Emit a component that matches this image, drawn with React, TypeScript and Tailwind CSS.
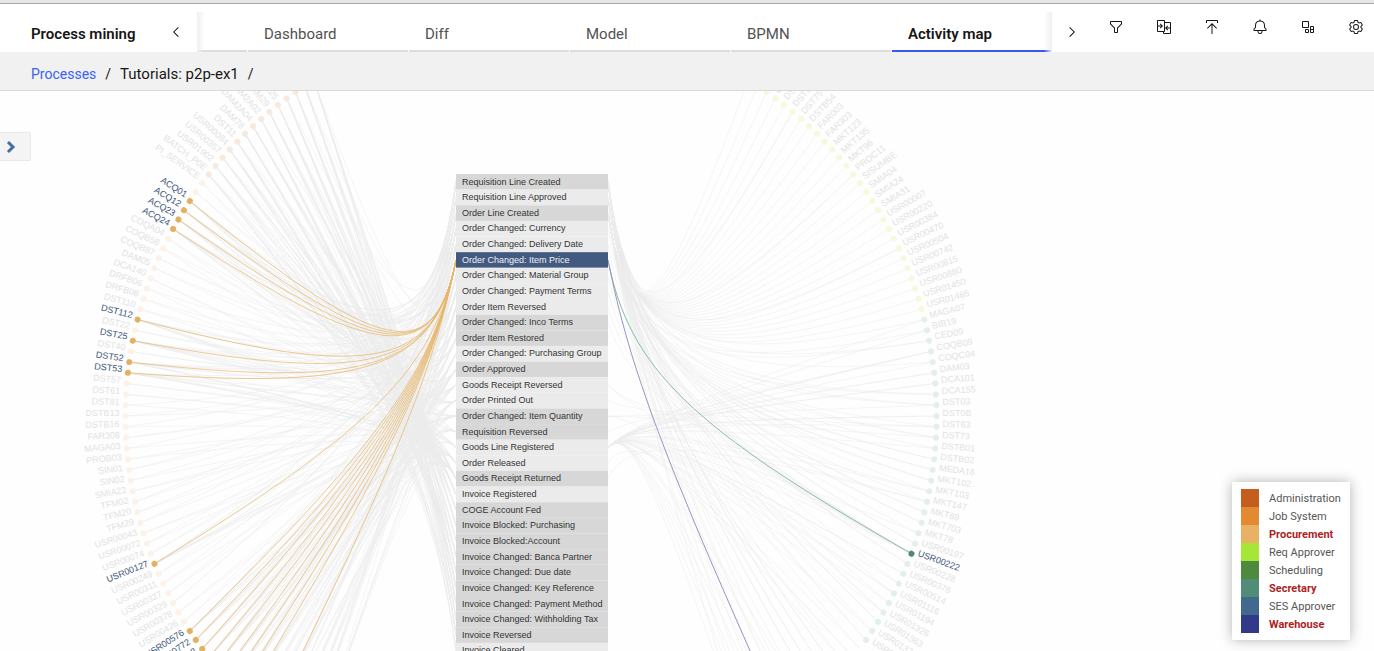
import React from "react";

type Side = "left" | "right";

interface ActivityNode {
  side: Side;
  step: number;
  label: string;
  color: string;
}

const CENTER_X = 531;
const CENTER_Y = 416;
const RADIUS_X = 405.5;
const RADIUS_Y = 398;
const STEP = (1.557 * Math.PI) / 180;
const LAST_STEP = 37;

const LIST_LEFT = 456;
const LIST_WIDTH = 152;
const LIST_TOP = 174;
const ROW_HEIGHT = 15.63;
const SELECTED_ROW = 5;

const activities: { name: string; dark?: boolean }[] = [
  { name: "Requisition Line Created", dark: true },
  { name: "Requisition Line Approved" },
  { name: "Order Line Created", dark: true },
  { name: "Order Changed: Currency" },
  { name: "Order Changed: Delivery Date" },
  { name: "Order Changed: Item Price" },
  { name: "Order Changed: Material Group" },
  { name: "Order Changed: Payment Terms" },
  { name: "Order Item Reversed" },
  { name: "Order Changed: Inco Terms", dark: true },
  { name: "Order Item Restored", dark: true },
  { name: "Order Changed: Purchasing Group" },
  { name: "Order Approved", dark: true },
  { name: "Goods Receipt Reversed" },
  { name: "Order Printed Out" },
  { name: "Order Changed: Item Quantity", dark: true },
  { name: "Requisition Reversed", dark: true },
  { name: "Goods Line Registered" },
  { name: "Order Released" },
  { name: "Goods Receipt Returned", dark: true },
  { name: "Invoice Registered" },
  { name: "COGE Account Fed", dark: true },
  { name: "Invoice Blocked: Purchasing", dark: true },
  { name: "Invoice Blocked:Account", dark: true },
  { name: "Invoice Changed: Banca Partner", dark: true },
  { name: "Invoice Changed: Due date", dark: true },
  { name: "Invoice Changed: Key Reference", dark: true },
  { name: "Invoice Changed: Payment Method", dark: true },
  { name: "Invoice Changed: Withholding Tax", dark: true },
  { name: "Invoice Reversed", dark: true },
  { name: "Invoice Cleared" },
];

// Labels run from the top of the ring (step 35) downwards.
const leftLabels = [
  "", "", "DAM25", "DAM29", "DAM2A02", "DAM2A04", "DAM78", "DST11",
  "USR00084", "USR00357", "USR01902", "BATCH_P0E", "PI_SERVICE", "", "ACQ01",
  "ACQ12", "ACQ23", "ACQ24", "COQA04", "COQB58", "COQB87", "DAM05", "DCA140",
  "DRFB06", "DRFB08", "DST110", "DST112", "DST22", "DST25", "DST40", "DST52",
  "DST53", "DST57", "DST61", "DST81", "DSTB13", "DSTB16", "FAR308", "MAGA03",
  "PROB03", "SIN01", "SIN02", "SMIA22", "TFM02", "TFM20", "TFM29", "USR00043",
  "USR00072", "USR00074", "USR00127", "USR00249", "USR00311", "USR00327",
  "USR00329", "USR00378", "USR00426", "USR00576", "USR00772", "USR00792",
];

const rightLabels = [
  "", "DST40", "DST51", "DST58", "DST75", "DSTB54", "FAR003", "FAR303",
  "MKT123", "MKT135", "MKT96", "PROC11", "SISUMBE", "SMIA04", "SMIA24",
  "SMIA31", "USR00007", "USR00220", "USR00384", "USR00470", "USR00504",
  "USR00742", "USR00815", "USR00880", "USR01450", "USR01465", "MAGA07",
  "BIB19", "CED09", "COQB09", "COQC04", "DAM03", "DCA101", "DCA155", "DST03",
  "DST0B", "DST63", "DST73", "DSTB01", "DSTB02", "MEDA16", "MKT102", "MKT103",
  "MKT147", "MKT69", "MKT703", "MKT78", "USR00197", "USR00222", "USR00228",
  "USR00376", "USR00514", "USR01116", "USR01194", "USR01326", "USR01363",
  "USR01371", "USR01380",
];

const activeLeft = [
  21, 20, 19, 18, 9, 7, 5, 4, -14, -21, -22, -23, -24, -25, -26, -27, -28, -29, -32,
];
const activeRight = [-13];

const leftNodes: ActivityNode[] = leftLabels.map((label, i) => {
  const step = 35 - i;
  return { side: "left", step, label, color: step > 23 ? "#f8e9df" : "#fcf2e5" };
});
const rightNodes: ActivityNode[] = rightLabels.map((label, i) => {
  const step = 35 - i;
  return { side: "right", step, label, color: step > 9 ? "#f4fadb" : "#e3efea" };
});

function position(side: Side, step: number) {
  const angle = step * STEP;
  const direction = side === "left" ? -1 : 1;
  return {
    x: CENTER_X + direction * RADIUS_X * Math.cos(angle),
    y: CENTER_Y - RADIUS_Y * Math.sin(angle),
  };
}

function linkPath(side: Side, step: number, row: number) {
  const a = position(side, step);
  const bx = side === "left" ? LIST_LEFT : LIST_LEFT + LIST_WIDTH;
  const by = LIST_TOP + (row + 0.5) * ROW_HEIGHT;
  const cx = side === "left" ? 429 : 635;
  const cy = CENTER_Y + (by - CENTER_Y) * 0.13;
  const p = (from: number, to: number) => (from * 0.2 + to * 0.8).toFixed(1);
  return `M${a.x.toFixed(1)} ${a.y.toFixed(1)}C${p(a.x, cx)} ${p(a.y, cy)} ${p(bx, cx)} ${p(by, cy)} ${bx} ${by.toFixed(1)}`;
}

function seeded(seed: number) {
  let state = seed;
  return () => {
    state = (state * 1664525 + 1013904223) % 4294967296;
    return state / 4294967296;
  };
}

function buildBackgroundLinks() {
  const random = seeded(17);
  const paths: string[] = [];
  for (let step = LAST_STEP; step >= -LAST_STEP; step--) {
    const administration = step > 23;
    const busy = activeLeft.includes(step);
    const count = administration ? 8 : busy ? 9 : step < -20 ? 5 : 2;
    for (let n = 0; n < count; n++) {
      const row = administration
        ? n === 0
          ? Math.floor(random() * 20)
          : 19 + Math.floor(random() * 12)
        : Math.floor(random() * 20);
      paths.push(linkPath("left", step, row));
    }
  }
  for (let step = LAST_STEP; step >= -LAST_STEP; step--) {
    if (step > 9) {
      paths.push(linkPath("right", step, 1));
      if (step % 8 === 0) paths.push(linkPath("right", step, 0));
    } else {
      const rows = [0, 2, 17];
      for (let n = 0; n < 2; n++) {
        paths.push(linkPath("right", step, rows[Math.floor(random() * 3)]));
      }
      if (random() > 0.75) paths.push(linkPath("right", step, 13 + Math.floor(random() * 7)));
      if (step === -13) for (let n = 2; n < 10; n++) paths.push(linkPath("right", step, n));
    }
  }
  return paths;
}

const backgroundLinks = buildBackgroundLinks();

function NodeMark({ node }: { node: ActivityNode }) {
  const { x, y } = position(node.side, node.step);
  const left = node.side === "left";
  const active = left ? activeLeft.includes(node.step) : activeRight.includes(node.step);
  const rotation = (left ? 1 : -1) * node.step * 1.557;
  const fill = active ? (left ? "#e5b061" : "#4b8b73") : node.color;
  return (
    <g transform={`translate(${x.toFixed(1)} ${y.toFixed(1)}) rotate(${rotation.toFixed(1)})`}>
      <circle r="3" fill={fill} />
      {node.label && (
        <text
          x={left ? -6 : 6}
          y={0}
          textAnchor={left ? "end" : "start"}
          fill={active ? "#3d5479" : "#e2e2e2"}
        >
          {node.label}
        </text>
      )}
    </g>
  );
}

function ActivityMap() {
  return (
    <svg
      className="block shrink-0 font-['Liberation_Sans',Arial,sans-serif] text-[9px]"
      width="1020"
      height="568"
      viewBox="0 91 1020 568"
      role="img"
      aria-label="Activity map"
    >
      <g fill="none" stroke="#ebebeb" strokeOpacity="0.5">
        {backgroundLinks.map((d, i) => (
          <path key={i} d={d} />
        ))}
      </g>
      <g fill="none" stroke="#e7b566" strokeOpacity="0.7">
        {activeLeft.map((step) => (
          <path key={step} d={linkPath("left", step, SELECTED_ROW)} />
        ))}
      </g>
      <path d={linkPath("right", -13, SELECTED_ROW)} fill="none" stroke="#8bbcab" />
      <path d={linkPath("right", -33, SELECTED_ROW)} fill="none" stroke="#9695c3" />
      {leftNodes.map((node) => (
        <NodeMark key={`l${node.step}`} node={node} />
      ))}
      {rightNodes.map((node) => (
        <NodeMark key={`r${node.step}`} node={node} />
      ))}
      {activities.map((activity, row) => {
        const selected = row === SELECTED_ROW;
        const y = LIST_TOP + row * ROW_HEIGHT;
        return (
          <g key={activity.name}>
            <rect
              x={LIST_LEFT}
              y={y}
              width={LIST_WIDTH}
              height={ROW_HEIGHT}
              fill={selected ? "#435a80" : activity.dark ? "#d7d7d7" : "#ebebeb"}
            />
            <text x={LIST_LEFT + 6} y={Math.floor(y + 11)} fill={selected ? "#eef1f6" : "#333333"}>
              {activity.name}
            </text>
          </g>
        );
      })}
    </svg>
  );
}

function Icon({ children }: { children: React.ReactNode }) {
  return (
    <svg className="size-4" viewBox="0 0 32 32" fill="currentColor" aria-hidden="true">
      {children}
    </svg>
  );
}

const tools: { name: string; icon: React.ReactNode }[] = [
  {
    name: "Filter",
    icon: (
      <path d="M18,28H14a2,2,0,0,1-2-2V18.41L4.59,11A2,2,0,0,1,4,9.59V6A2,2,0,0,1,6,4H26a2,2,0,0,1,2,2V9.59A2,2,0,0,1,27.41,11L20,18.41V26A2,2,0,0,1,18,28ZM6,6V9.59l8,8V26h4V17.59l8-8V6Z" />
    ),
  },
  {
    name: "Compare",
    icon: (
      <path d="M28 6H18V4a2 2 0 0 0-2-2H4A2 2 0 0 0 2 4V24a2 2 0 0 0 2 2h10v2a2 2 0 0 0 2 2H28a2 2 0 0 0 2-2V8A2 2 0 0 0 28 6ZM4 15h6.17L7.59 17.59 9 19l5-5L9 9 7.59 10.41 10.17 13H4V4H16V24H4ZM16 28V26a2 2 0 0 0 2-2V8H28v9H21.83l2.58-2.59L23 13l-5 5 5 5 1.41-1.41L21.83 19H28v9Z" />
    ),
  },
  {
    name: "Upload",
    icon: (
      <path d="M6 18L7.41 19.41 15 11.83V30h2V11.83l7.59 7.58L26 18 16 8ZM6 8V4H26V8h2V4a2 2 0 0 0-2-2H6A2 2 0 0 0 4 4V8Z" />
    ),
  },
  {
    name: "Notifications",
    icon: (
      <path d="M28.7071,19.293,26,16.5859V13a10.0136,10.0136,0,0,0-9-9.9492V1H15V3.0508A10.0136,10.0136,0,0,0,6,13v3.5859L3.2929,19.293A1,1,0,0,0,3,20v3a1,1,0,0,0,1,1h7v.7768a5.152,5.152,0,0,0,4.5,5.1987A5.0057,5.0057,0,0,0,21,25V24h7a1,1,0,0,0,1-1V20A1,1,0,0,0,28.7071,19.293ZM19,25a3,3,0,0,1-6,0V24h6Zm8-3H5V20.4141L7.707,17.707A1,1,0,0,0,8,17V13a8,8,0,0,1,16,0v4a1,1,0,0,0,.293.707L27,20.4141Z" />
    ),
  },
  {
    name: "Apps",
    icon: (
      <g fill="none" stroke="currentColor" strokeWidth="2">
        <path d="M5 5H17V17H5Z" />
        <path d="M21 15H27V21H21Z" />
        <path d="M11 21H17V27H11Z" />
        <path d="M21 21H27V27H21Z" />
      </g>
    ),
  },
  {
    name: "Settings",
    icon: (
      <path d="M27,16.76c0-.25,0-.5,0-.76s0-.51,0-.77l1.92-1.68A2,2,0,0,0,29.3,11L26.94,7a2,2,0,0,0-1.73-1,2,2,0,0,0-.64.1l-2.43.82a11.35,11.35,0,0,0-1.31-.75l-.51-2.52a2,2,0,0,0-2-1.61H13.64a2,2,0,0,0-2,1.61l-.51,2.52a11.48,11.48,0,0,0-1.32.75L7.43,6.06A2,2,0,0,0,6.79,6,2,2,0,0,0,5.06,7L2.7,11a2,2,0,0,0,.41,2.51L5,15.24c0,.25,0,.5,0,.76s0,.51,0,.77L3.11,18.45A2,2,0,0,0,2.7,21L5.06,25a2,2,0,0,0,1.73,1,2,2,0,0,0,.64-.1l2.43-.82a11.35,11.35,0,0,0,1.31.75l.51,2.52a2,2,0,0,0,2,1.61h4.72a2,2,0,0,0,2-1.61l.51-2.52a11.48,11.48,0,0,0,1.32-.75l2.42.82a2,2,0,0,0,.64.1,2,2,0,0,0,1.73-1L29.3,21a2,2,0,0,0-.41-2.51ZM25.21,24l-3.43-1.16a8.86,8.86,0,0,1-2.71,1.57L18.36,28H13.64l-.71-3.55a9.36,9.36,0,0,1-2.7-1.57L6.79,24,4.43,20l2.72-2.4a8.9,8.9,0,0,1,0-3.13L4.43,12,6.79,8l3.43,1.16a8.86,8.86,0,0,1,2.71-1.57L13.64,4h4.72l.71,3.55a9.36,9.36,0,0,1,2.7,1.57L25.21,8,27.57,12l-2.72,2.4a8.9,8.9,0,0,1,0,3.13L27.57,20ZM16,22a6,6,0,1,1,6-6A5.94,5.94,0,0,1,16,22Zm0-10a3.91,3.91,0,0,0-4,4,3.91,3.91,0,0,0,4,4,3.91,3.91,0,0,0,4-4A3.91,3.91,0,0,0,16,12Z" />
    ),
  },
];

const tabs = ["Dashboard", "Diff", "Model", "BPMN", "Activity map"];

const legend = [
  { name: "Administration", swatch: "bg-[#c55d1c]" },
  { name: "Job System", swatch: "bg-[#e28932]" },
  { name: "Procurement", swatch: "bg-[#e8b163]", active: true },
  { name: "Req Approver", swatch: "bg-[#a6e637]" },
  { name: "Scheduling", swatch: "bg-[#4e893e]" },
  { name: "Secretary", swatch: "bg-[#508c77]", active: true },
  { name: "SES Approver", swatch: "bg-[#41688d]" },
  { name: "Warehouse", swatch: "bg-[#31398b]", active: true },
];

export default function App() {
  return (
    <div className="flex h-screen flex-col overflow-hidden bg-[#fefefe] font-[Roboto,sans-serif] text-[#161616]">
      <div className="h-1 shrink-0 border-b border-[#a8a8a8] bg-[#e6e6e6]" />
      <header className="flex h-12 shrink-0 overflow-hidden bg-white">
        <div className="flex w-[197px] shrink-0 items-center justify-between pt-2 pr-3 pl-[31px]">
          <h1 className="pt-1 text-[15px] leading-5 font-semibold">Process mining</h1>
          <button type="button" aria-label="Previous tabs" className="flex size-[18px] items-center justify-center">
            <Icon>
              <path d="M10 16L20 6 21.4 7.4 12.8 16 21.4 24.6 20 26z" />
            </Icon>
          </button>
        </div>
        <nav className="relative mt-2 flex min-w-0 flex-1 justify-end overflow-hidden" aria-label="Views">
          <a href="#overview" aria-label="Overview" className="ml-px w-40 shrink-0 border-b-2 border-[#dcdcdc]" />
          {tabs.map((tab) => (
            <a
              key={tab}
              href={`#${tab.toLowerCase().replace(" ", "-")}`}
              aria-current={tab === "Activity map" ? "page" : undefined}
              className={
                tab === "Activity map"
                  ? "ml-px flex w-40 shrink-0 items-center border-b-2 border-[#3858f5] px-4 pt-1.5 text-[15px] leading-5 font-semibold"
                  : "ml-px flex w-40 shrink-0 items-center border-b-2 border-[#dcdcdc] px-4 pt-1.5 text-[15px] leading-5 text-[#525252]"
              }
            >
              {tab}
            </a>
          ))}
          <span className="absolute inset-y-0 left-0 w-2 bg-linear-to-r from-[#efefef] to-transparent" />
          <span className="absolute inset-y-0 right-0 w-2 bg-linear-to-l from-[#efefef] to-transparent" />
        </nav>
        <button type="button" aria-label="Next tabs" className="flex w-10 shrink-0 items-center justify-center pt-2">
          <Icon>
            <path d="M22 16L12 26 10.6 24.6 19.2 16 10.6 7.4 12 6z" />
          </Icon>
        </button>
        <div className="-mr-1.5 flex shrink-0">
          {tools.map((tool) => (
            <button key={tool.name} type="button" aria-label={tool.name} className="flex h-[46px] w-12 items-center justify-center">
              <Icon>{tool.icon}</Icon>
            </button>
          ))}
        </div>
      </header>
      <nav
        aria-label="Breadcrumb"
        className="flex h-[39px] shrink-0 items-center gap-[9px] border-b border-[#d9d9d9] bg-[#f1f1f1] pt-1.5 pl-[31px] text-sm leading-5"
      >
        <a href="#processes" className="text-[#3c61f6]">
          Processes
        </a>
        <span>/</span>
        <a href="#tutorials" className="text-[15px]">
          Tutorials: p2p-ex1
        </a>
        <span>/</span>
      </nav>
      <main className="relative min-h-0 flex-1 overflow-hidden">
        <ActivityMap />
        <button
          type="button"
          aria-label="Open panel"
          className="absolute top-[41px] left-0 flex h-[29px] w-[31px] items-center rounded-r-xs border border-l-0 border-[#e9e9e9] bg-[#f4f4f4] pl-1.5"
        >
          <svg className="h-3.5 w-3" viewBox="0 0 12 14" fill="none" stroke="#456ca6" strokeWidth="3">
            <path d="M2 2l5 5-5 5" />
          </svg>
        </button>
        <ul className="absolute right-6 bottom-[11px] w-[118px] bg-white px-[9px] py-[7px] text-[11px] text-[#565656] shadow-[0_0_12px_rgba(0,0,0,0.3)]">
          {legend.map((item) => (
            <li key={item.name} className="flex h-[18px] items-center gap-2.5">
              <span className={`size-[18px] shrink-0 ${item.swatch}`} />
              <span
                className={
                  item.active
                    ? "pt-0.5 font-bold whitespace-nowrap text-[#ad1f1f]"
                    : "pt-0.5 whitespace-nowrap"
                }
              >
                {item.name}
              </span>
            </li>
          ))}
        </ul>
      </main>
    </div>
  );
}
